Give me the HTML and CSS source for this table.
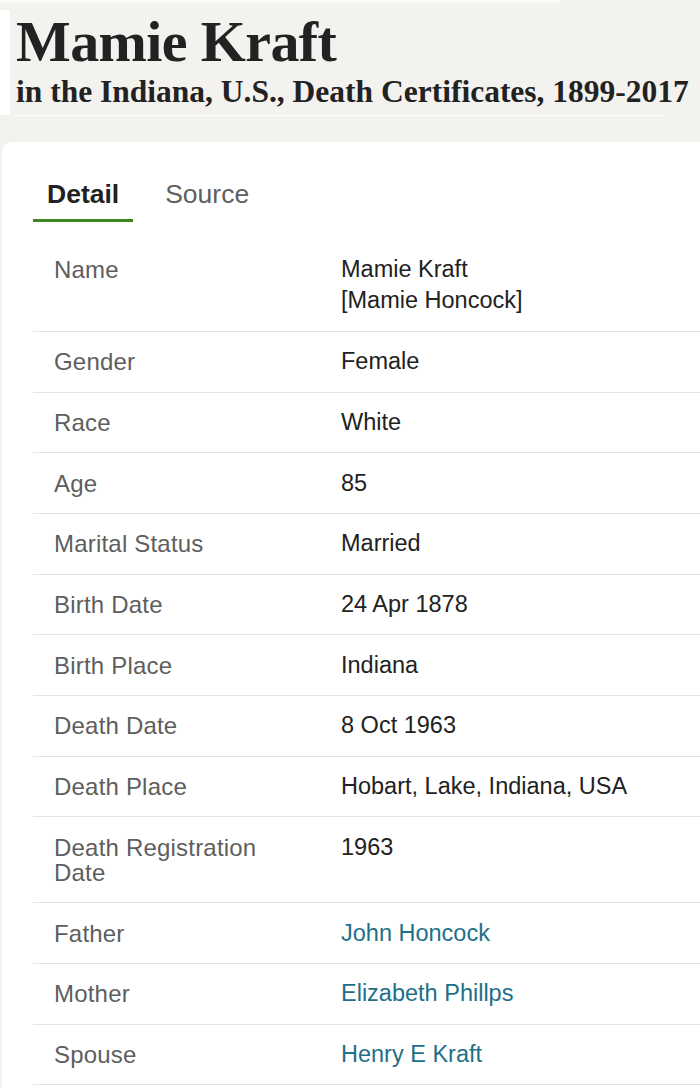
FILE: index.html
```html
<!DOCTYPE html>
<html lang="en">
<head>
<meta charset="utf-8">
<title>Mamie Kraft – Indiana, U.S., Death Certificates, 1899-2017</title>
<link rel="stylesheet" href="styles.css">
</head>
<body>
  <div class="top-rule"></div>
  <header class="masthead">
    <h1 class="title">Mamie Kraft</h1>
    <h2 class="subtitle">in the Indiana, U.S., Death Certificates, 1899-2017</h2>
  </header>
  <div class="masthead-rule"></div>

  <main class="card">
    <nav class="tabs">
      <span class="tab tab-active">Detail</span>
      <span class="tab">Source</span>
    </nav>

    <div class="rows">
      <div class="row">
        <div class="label">Name</div>
        <div class="value">
          <div>Mamie Kraft</div>
          <div class="alt-name">[Mamie Honcock]</div>
        </div>
      </div>
      <div class="row">
        <div class="label">Gender</div>
        <div class="value">Female</div>
      </div>
      <div class="row">
        <div class="label">Race</div>
        <div class="value">White</div>
      </div>
      <div class="row">
        <div class="label">Age</div>
        <div class="value">85</div>
      </div>
      <div class="row">
        <div class="label">Marital Status</div>
        <div class="value">Married</div>
      </div>
      <div class="row">
        <div class="label">Birth Date</div>
        <div class="value">24 Apr 1878</div>
      </div>
      <div class="row">
        <div class="label">Birth Place</div>
        <div class="value">Indiana</div>
      </div>
      <div class="row">
        <div class="label">Death Date</div>
        <div class="value">8 Oct 1963</div>
      </div>
      <div class="row">
        <div class="label">Death Place</div>
        <div class="value">Hobart, Lake, Indiana, USA</div>
      </div>
      <div class="row">
        <div class="label">Death Registration Date</div>
        <div class="value">1963</div>
      </div>
      <div class="row">
        <div class="label">Father</div>
        <div class="value"><a class="link" href="#">John Honcock</a></div>
      </div>
      <div class="row">
        <div class="label">Mother</div>
        <div class="value"><a class="link" href="#">Elizabeth Phillps</a></div>
      </div>
      <div class="row">
        <div class="label">Spouse</div>
        <div class="value"><a class="link" href="#">Henry E Kraft</a></div>
      </div>
    </div>
  </main>
</body>
</html>
```
FILE: styles.css
```css
html, body {
  margin: 0;
  padding: 0;
}

body {
  background: #f4f2ef;
  font-family: "Liberation Sans", Arial, sans-serif;
  overflow: hidden;
}

.top-rule {
  width: 560px;
  height: 3px;
  background: #fbfaf9;
}

.masthead {
  margin-top: 7px;
  height: 105px;
  box-sizing: border-box;
  border-left: 10px solid #ffffff;
  padding: 2px 0 0 6px;
}

.title {
  margin: 0;
  font-family: "Liberation Serif", "Times New Roman", serif;
  font-weight: 700;
  font-size: 58px;
  line-height: 60px;
  letter-spacing: -0.6px;
  color: #222222;
}

.subtitle {
  margin: 2px 0 0;
  font-family: "Liberation Serif", "Times New Roman", serif;
  font-weight: 700;
  font-size: 31.5px;
  line-height: 36px;
  color: #222222;
  white-space: nowrap;
}

.masthead-rule {
  margin-left: 12px;
  width: 653px;
  height: 1px;
  background: #fcfbfa;
}

.card {
  margin: 26px 0 0 2px;
  background: #ffffff;
  border-top-left-radius: 10px;
  padding: 37px 0 0 31px;
  min-height: 1000px;
}

.tabs {
  display: flex;
  gap: 18px;
  margin-bottom: 18px;
}

.tab {
  font-size: 26.5px;
  line-height: 30px;
  padding: 0 14px 10px;
  border-bottom: 3px solid transparent;
  color: #5f5f5f;
}

.tab-active {
  font-weight: 700;
  color: #222222;
  border-bottom-color: #3f8520;
}

.row {
  display: grid;
  grid-template-columns: 287px 1fr;
  padding: 17.2px 0 17.2px 21px;
  border-bottom: 1px solid #e4e4e4;
  line-height: 25.3px;
}

.label {
  color: #5e5e5e;
  font-size: 24px;
  letter-spacing: 0.2px;
  padding-right: 50px;
}

.value {
  color: #222222;
  font-size: 23.5px;
}

.alt-name {
  margin-top: 6px;
}

.link {
  color: #1e6f87;
  text-decoration: none;
}
```
